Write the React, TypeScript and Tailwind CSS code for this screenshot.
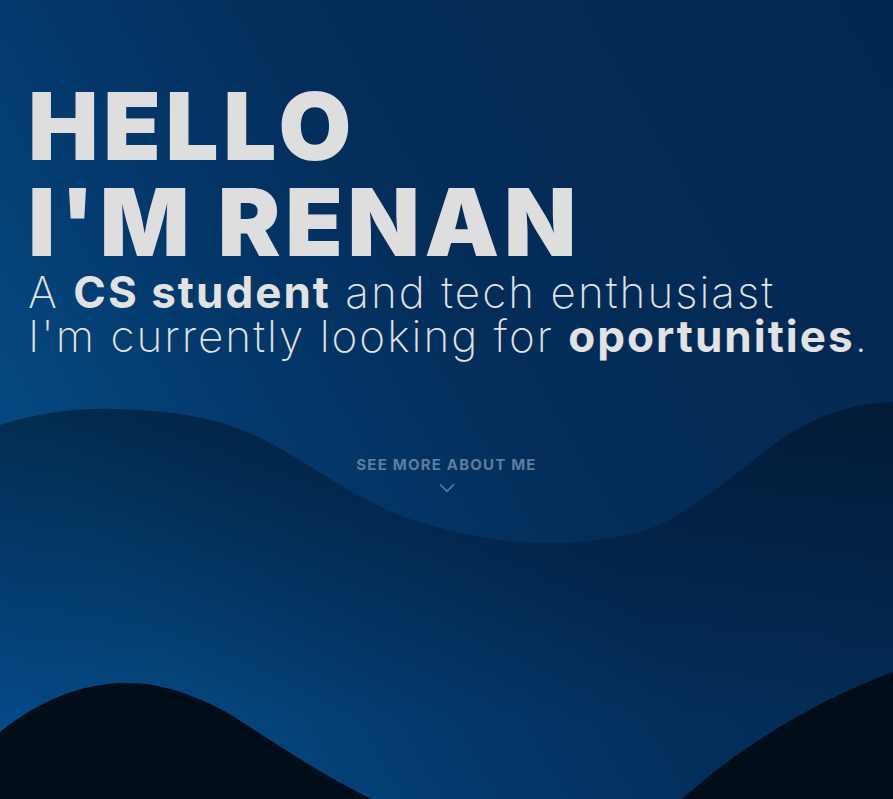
import { ChevronDown } from "lucide-react";

function Waves() {
    return (
        <svg
            className="absolute inset-0 w-full h-full"
            viewBox="0 0 893 799"
            preserveAspectRatio="none"
            aria-hidden
        >
            <defs>
                <linearGradient id="waveShade" x1="0" y1="400" x2="0" y2="720" gradientUnits="userSpaceOnUse">
                    <stop offset="0" stopColor="#000814" stopOpacity="0.45" />
                    <stop offset="1" stopColor="#000814" stopOpacity="0" />
                </linearGradient>
            </defs>
            <path
                d="M0 425 C 40 412, 80 408, 114 409 C 170 410, 215 418, 250 433 C 300 455, 360 505, 420 522 C 470 538, 520 544, 558 543 C 600 542, 640 535, 665 522 C 700 505, 740 470, 780 440 C 820 412, 860 403, 893 402 L 893 799 L 0 799 Z"
                fill="url(#waveShade)"
            />
            <path
                d="M0 732 C 40 700, 80 684, 125 683 C 160 682, 195 695, 228 713 C 270 740, 330 780, 372 799 L 0 799 Z"
                fill="#010d18"
            />
            <path d="M682 799 C 750 738, 830 695, 893 672 L 893 799 Z" fill="#010d18" />
        </svg>
    );
}

export default function App() {
    return (
        <div className="relative w-full h-[799px] overflow-hidden bg-[linear-gradient(60deg,#04498a_0%,#05477f_18%,#043a6e_34%,#042d5a_55%,#03284f_100%)] font-['Inter',sans-serif]">
            <Waves />
            <div className="relative flex flex-col">
                <div className="pl-[28px] pt-[78px]">
                    <h1 className="text-[94px] leading-[96px] font-black text-[#dedede] tracking-[0.05em]">
                        HELLO
                        <br />
                        I'M RENAN
                    </h1>
                    <p className="text-[44px] leading-[44px] font-extralight text-[#e2e2e2] tracking-[0.046em]">
                        A <strong className="font-bold">CS student</strong> and tech enthusiast
                        <br />
                        I'm currently looking for <strong className="font-bold">oportunities</strong>.
                    </p>
                </div>
                <a href="#about" className="mt-[97px] flex flex-col items-center text-[#5f7d9c]">
                    <span className="text-[15px] leading-[20px] font-bold tracking-[0.08em]">SEE MORE ABOUT ME</span>
                    <ChevronDown size={26} strokeWidth={1.6} />
                </a>
            </div>
        </div>
    );
}
